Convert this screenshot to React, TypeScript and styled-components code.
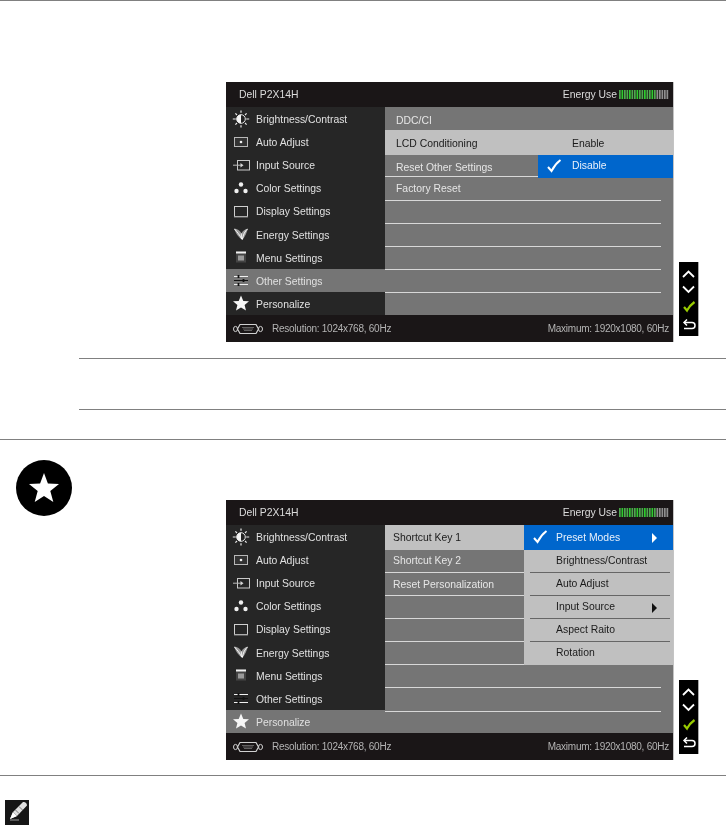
import React from "react";
import styled, { createGlobalStyle } from "styled-components";

const Global = createGlobalStyle`
  html, body { margin: 0; padding: 0; background: #fff; }
  #root { width: 726px; height: 825px; overflow: hidden; }
`;

const Page = styled.div`
  width: 726px;
  height: 825px;
  overflow: hidden;
  display: flex;
  flex-direction: column;
  font-family: "Liberation Sans", Arial, sans-serif;
`;
const Section = styled.section`
  border-top: 1px solid #808080;
  display: flex;
  flex-direction: column;
`;
const LastSection = styled(Section)`
  margin-top: 15px;
`;
const FigureRow = styled.div<{ $top: number }>`
  display: flex;
  align-items: flex-end;
  gap: 5px;
  padding: ${(p) => p.$top}px 0 0 226px;
`;
const Note = styled.div`
  margin: 16px 0 29px 79px;
  height: 50px;
  border-top: 1px solid #808080;
  border-bottom: 1px solid #808080;
`;
const BadgeRow = styled.div`
  height: 0;
  padding-left: 16px;
`;
const Badge = styled.svg`
  display: block;
  margin-top: 20px;
`;
const Pencil = styled.svg`
  display: block;
  margin: 24px 0 0 5px;
`;

const Osd = styled.div`
  width: 447px;
  height: 260px;
  border-right: 1px solid #c4c4c4;
  display: grid;
  grid-template-rows: 25px 208px 27px;
  filter: blur(0.35px);
  font-size: 10.4px;
`;
const Bar = styled.div`
  background: #1a1617;
  display: flex;
  align-items: center;
  justify-content: space-between;
  color: #dcdcdc;
`;
const Header = styled(Bar)`
  padding: 0 4px 0 13px;
`;
const Footer = styled(Bar)`
  padding: 0 4px 0 7px;
  color: #b4b4b4;
  font-size: 10px;
  letter-spacing: -0.25px;
`;
const Energy = styled.span`
  display: flex;
  align-items: center;
  gap: 2px;
`;
const FooterLeft = styled.span`
  display: flex;
  align-items: center;
  gap: 9px;
`;
const Body = styled.div`
  display: grid;
  grid-template-columns: 159px 288px;
  background: #757575;
  min-height: 0;
`;
const Side = styled.div`
  display: grid;
  grid-template-rows: repeat(9, 1fr);
  background: #262626;
`;
const SideRow = styled.div<{ $active?: boolean }>`
  display: grid;
  grid-template-columns: 30px 1fr;
  align-items: center;
  color: #e0e0e0;
  background: ${(p) => (p.$active ? "#757575" : "transparent")};
`;
const SideIcon = styled.span`
  display: flex;
  justify-content: center;
  align-items: center;
`;
const SideLabel = styled.span`
  padding-top: 2px;
`;
const Main = styled.div`
  position: relative;
  display: flex;
  flex-direction: column;
`;
const MainRow = styled.div<{ $h: number; $light?: boolean; $line?: boolean; $pad: number; $nudge: number }>`
  box-sizing: border-box;
  height: ${(p) => p.$h}px;
  padding-left: ${(p) => p.$pad}px;
  padding-top: ${(p) => Math.max(p.$nudge, 0)}px;
  padding-bottom: ${(p) => Math.max(-p.$nudge, 0)}px;
  margin-right: ${(p) => (p.$light ? 0 : 12)}px;
  display: flex;
  align-items: center;
  background: ${(p) => (p.$light ? "#c0c0c0" : "transparent")};
  color: ${(p) => (p.$light ? "#1a1a1a" : "#e6e6e6")};
  border-bottom: ${(p) => (p.$line ? "1.5px solid #d8d8d8" : "none")};
`;
const Popup = styled.div<{ $top: number; $w: number }>`
  position: absolute;
  top: ${(p) => p.$top}px;
  right: 0;
  width: ${(p) => p.$w}px;
  background: #c0c0c0;
  display: flex;
  flex-direction: column;
`;
const PopupRow = styled.div<{ $selected?: boolean; $h: number; $indent: number; $line?: boolean; $lift?: number }>`
  box-sizing: border-box;
  height: ${(p) => p.$h}px;
  position: relative;
  display: flex;
  align-items: center;
  padding-left: ${(p) => p.$indent}px;
  padding-bottom: ${(p) => Math.max(p.$lift ?? 0, 0)}px;
  padding-top: ${(p) => Math.max(-(p.$lift ?? 0), 0)}px;
  background: ${(p) => (p.$selected ? "#0066cc" : "transparent")};
  color: ${(p) => (p.$selected ? "#e8f0fa" : "#1a1a1a")};
  ${(p) =>
    p.$line
      ? `&::after { content: ""; position: absolute; left: 6px; right: 3px; bottom: 0; height: 1px; background: #666; }`
      : ""}
`;
const Check = styled.svg`
  position: absolute;
  left: 8px;
  top: 50%;
  margin-top: -8px;
`;
const Arrow = styled.span<{ $color: string }>`
  position: absolute;
  left: 128px;
  top: 50%;
  margin-top: -5px;
  border-left: 5px solid ${(p) => p.$color};
  border-top: 5px solid transparent;
  border-bottom: 5px solid transparent;
`;
const Buttons = styled.div`
  width: 19px;
  height: 74px;
  margin-bottom: 6px;
  background: #000;
  box-shadow: 1px 0 0 #aaa;
  filter: blur(0.2px);
`;

const S = "#e8e8e8";
const Ico = ({ children, w = 18, h = 14 }: { children: React.ReactNode; w?: number; h?: number }) => (
  <svg width={w} height={h} viewBox={`0 0 ${w} ${h}`} fill="none">
    {children}
  </svg>
);
const icons: Record<string, React.ReactNode> = {
  sun: (
    <Ico h={18}>
      <circle cx="9" cy="9" r="4.3" fill="#222" stroke={S} />
      <path d="M9 4.700a4.300 4.300 0 0 0 0 8.600z" fill="#f4f4f4" />
      <path d="M9 .5v2.300M9 15.200v2.300M.8 9h3M14.200 9h3M3.400 3.400l1.600 1.600M14.600 3.400L13 5M3.400 14.600L5 13M14.600 14.600L13 13" stroke={S} strokeWidth="1.200" />
    </Ico>
  ),
  auto: (
    <Ico>
      <rect x="2.500" y="2.500" width="13" height="9" fill="#333" stroke="#b8b8b8" />
      <circle cx="9" cy="7" r="1.300" fill="#f0f0f0" />
    </Ico>
  ),
  input: (
    <Ico>
      <rect x="5.500" y="2.500" width="12" height="9.500" stroke="#c8c8c8" />
      <path d="M1 7.200h9" stroke="#bbb" />
      <path d="M8.500 5L11.500 7.200 8.500 9.400z" fill="#d8d8d8" />
    </Ico>
  ),
  color: (
    <Ico>
      <circle cx="9" cy="3.500" r="2.200" fill="#f0f0f0" />
      <circle cx="4.500" cy="10" r="2.200" fill="#f0f0f0" />
      <circle cx="13.500" cy="10" r="2.200" fill="#f0f0f0" />
    </Ico>
  ),
  display: (
    <Ico>
      <rect x="2.500" y="2.500" width="13" height="10" stroke="#cfcfcf" />
      <path d="M2 13h14" stroke="#8a8a8a" />
    </Ico>
  ),
  energy: (
    <Ico>
      <path d="M2 1.500c3.500.5 6 2 7.500 5C10.500 4 12.500 2.500 16 1.500 15 5 13 10 10.500 12.500 7.500 11.500 4 7 2 1.500z" fill="#9a9a9a" />
      <path d="M2.500 2C5 5 8 8 10 12.500M9.500 6.500C9 8.500 9.500 10 10.500 12.500M15.500 2C13 4 11 8 10.500 12" stroke="#fff" strokeWidth=".9" fill="none" />
    </Ico>
  ),
  menu: (
    <Ico>
      <rect x="4" y="1.500" width="10" height="11" fill="#444" />
      <rect x="4" y="1.500" width="10" height="2" fill="#f0f0f0" />
      <rect x="6" y="5.500" width="6" height="5" fill="#9a9a9a" />
    </Ico>
  ),
  other: (
    <Ico>
      <path d="M2 3.500h14M2 7.500h14M2 11.500h14" stroke="#f0f0f0" strokeWidth="1" />
      <path d="M2 7.500h14" stroke="#111" strokeWidth="1" />
      <path d="M6.500 2v3M11.500 6v3M6.500 10v3" stroke="#111" strokeWidth="1.800" />
    </Ico>
  ),
  star: (
    <Ico h={16}>
      <path d="M9 .5l2.300 5.400 5.700.4-4.400 3.700 1.400 5.600L9 12.600l-5 3 1.400-5.600L1 6.300l5.700-.4z" fill="#f6f6f6" />
    </Ico>
  ),
};

const menu: [string, string][] = [
  ["sun", "Brightness/Contrast"],
  ["auto", "Auto Adjust"],
  ["input", "Input Source"],
  ["color", "Color Settings"],
  ["display", "Display Settings"],
  ["energy", "Energy Settings"],
  ["menu", "Menu Settings"],
  ["other", "Other Settings"],
  ["star", "Personalize"],
];

const EnergyBars = () => (
  <svg width="50" height="9" viewBox="0 0 50 9">
    {Array.from({ length: 20 }, (_, i) => (
      <rect
        key={i}
        x={i * 2.5}
        y="0"
        width="1.700"
        height="9"
        fill={i < 15 ? (i % 3 === 1 ? "#2ecc2e" : "#4fa84f") : "#8f8f8f"}
      />
    ))}
  </svg>
);
const Vga = () => (
  <svg width="30" height="12" viewBox="0 0 30 12" fill="none">
    <path d="M7 1.500h16l2.500 4.500L23 10.500H7L4.500 6z" stroke="#d0d0d0" strokeWidth="1.200" />
    <ellipse cx="2.500" cy="6" rx="2" ry="2.600" stroke="#d0d0d0" />
    <ellipse cx="27.500" cy="6" rx="2" ry="2.600" stroke="#d0d0d0" />
    <path d="M9.500 4.500h11M10.500 6h9M11.500 7.500h7" stroke="#aaa" strokeDasharray="1 1" />
  </svg>
);
const Tick = () => (
  <Check width="16" height="14" viewBox="0 0 16 14" fill="none">
    <path d="M2 8l3.500 4C8 7 10.500 4 14.500 1" stroke="#fff" strokeWidth="2" />
  </Check>
);

type RowDef = { text?: string; h: number; light?: boolean; line?: boolean; nudge?: number };

const OsdPanel = ({
  active,
  rows,
  pad,
  popup,
}: {
  active: string;
  rows: RowDef[];
  pad: number;
  popup: React.ReactNode;
}) => (
  <Osd>
    <Header>
      <span>Dell P2X14H</span>
      <Energy>
        Energy Use <EnergyBars />
      </Energy>
    </Header>
    <Body>
      <Side>
        {menu.map(([icon, label]) => (
          <SideRow key={label} $active={label === active}>
            <SideIcon>{icons[icon]}</SideIcon>
            <SideLabel>{label}</SideLabel>
          </SideRow>
        ))}
      </Side>
      <Main>
        {rows.map((r, i) => (
          <MainRow key={i} $h={r.h} $light={r.light} $line={r.line} $pad={pad} $nudge={r.nudge ?? 0}>
            {r.text}
          </MainRow>
        ))}
        {popup}
      </Main>
    </Body>
    <Footer>
      <FooterLeft>
        <Vga />
        Resolution: 1024x768, 60Hz
      </FooterLeft>
      <span>Maximum: 1920x1080, 60Hz</span>
    </Footer>
  </Osd>
);

const SideButtons = () => (
  <Buttons>
    <svg width="19" height="74" viewBox="0 0 19 74" fill="none">
      <path d="M4 15l5.500-5.500L15 15" stroke="#fff" strokeWidth="1.800" />
      <path d="M4 24.500l5.500 5.500 5.500-5.500" stroke="#fff" strokeWidth="1.800" />
      <path d="M5 45l3 3.500c2-3.500 4-6 7.500-8.500" stroke="#9c0" strokeWidth="2.200" />
      <path d="M5 60.500h8a3 3 0 0 1 0 6H5" stroke="#fff" strokeWidth="1.500" />
      <path d="M8 57.500L5 60.500 8 63.500" stroke="#fff" strokeWidth="1.500" />
    </svg>
  </Buttons>
);

const rows1: RowDef[] = [
  { text: "DDC/CI", h: 23, nudge: 4 },
  { text: "LCD Conditioning", h: 25, light: true, nudge: 2 },
  { text: "Reset Other Settings", h: 22, line: true, nudge: 4 },
  { text: "Factory Reset", h: 24, line: true },
  { h: 23, line: true },
  { h: 23, line: true },
  { h: 23, line: true },
  { h: 23, line: true },
  { h: 22 },
];
const rows2: RowDef[] = [
  { text: "Shortcut Key 1", h: 25, light: true },
  { text: "Shortcut Key 2", h: 23, line: true, nudge: -1 },
  { text: "Reset Personalization", h: 23, line: true },
  { h: 23, line: true },
  { h: 23, line: true },
  { h: 23, line: true },
  { h: 23, line: true },
  { h: 24, line: true },
  { h: 21 },
];
const popup2: { text: string; selected?: boolean; h: number; arrow?: boolean; line?: boolean }[] = [
  { text: "Preset Modes", selected: true, h: 25, arrow: true },
  { text: "Brightness/Contrast", h: 23, line: true },
  { text: "Auto Adjust", h: 23, line: true },
  { text: "Input Source", h: 23, arrow: true, line: true },
  { text: "Aspect Raito", h: 23, line: true },
  { text: "Rotation", h: 23 },
];

export default function App() {
  return (
    <Page>
      <Global />
      <Section>
        <FigureRow $top={81}>
          <OsdPanel
            active="Other Settings"
            rows={rows1}
            pad={11}
            popup={
              <Popup $top={23} $w={135}>
                <PopupRow $h={25} $indent={34} $lift={-2}>Enable</PopupRow>
                <PopupRow $h={23} $indent={34} $lift={3} $selected>
                  <Tick />
                  Disable
                </PopupRow>
              </Popup>
            }
          />
          <SideButtons />
        </FigureRow>
        <Note />
      </Section>
      <Section>
        <BadgeRow>
          <Badge width="56" height="56" viewBox="0 0 56 56">
            <circle cx="28" cy="28" r="28" fill="#000" />
            <path d="M28 13l3.900 10.500 11.100.6-8.700 7 3 10.900L28 36l-9.300 6 3-10.900-8.700-7 11.100-.6z" fill="#fff" />
          </Badge>
        </BadgeRow>
        <FigureRow $top={60}>
          <OsdPanel
            active="Personalize"
            rows={rows2}
            pad={8}
            popup={
              <Popup $top={0} $w={149}>
                {popup2.map((p) => (
                  <PopupRow
                    key={p.text}
                    $h={p.h}
                    $indent={32}
                    $selected={p.selected}
                    $line={p.line || undefined}
                    $lift={p.selected ? 0 : 3}
                  >
                    {p.selected && <Tick />}
                    {p.text}
                    {p.arrow && <Arrow $color={p.selected ? "#fff" : "#111"} />}
                  </PopupRow>
                ))}
              </Popup>
            }
          />
          <SideButtons />
        </FigureRow>
      </Section>
      <LastSection>
        <Pencil width="24" height="25" viewBox="0 0 24 25">
          <rect width="24" height="25" fill="#161616" />
          <path d="M5 19l3-7L18 2c2-.5 4 1 4 3.500L12 16z" fill="#e0e0e0" />
          <path d="M8 12l4 4M10.500 10l3.500 3.500M14 6.500l3.500 3.500" stroke="#777" />
          <path d="M5 19l3-7 4 4z" fill="#fff" />
          <path d="M5 20h9" stroke="#999" />
        </Pencil>
      </LastSection>
    </Page>
  );
}
